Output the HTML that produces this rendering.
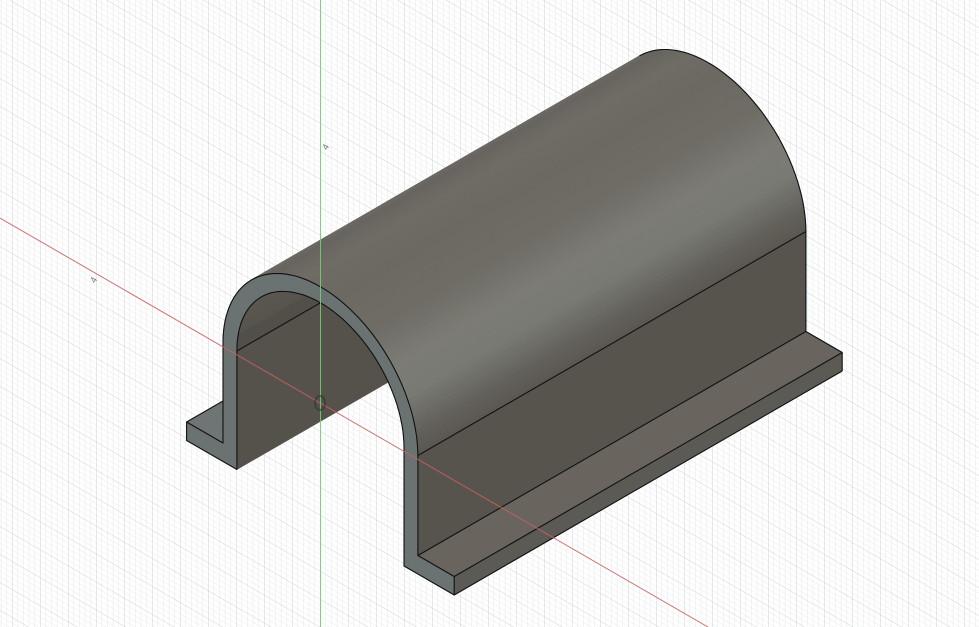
<!DOCTYPE html>
<html><head><meta charset="utf-8">
<style>html,body{margin:0;padding:0;background:#fff;overflow:hidden;width:979px;height:627px}svg{display:block}</style>
</head><body>
<svg id="s" width="979" height="627" viewBox="0 0 979 627" xmlns="http://www.w3.org/2000/svg">
<defs>
<pattern id="gMinor" width="5.6" height="5.6" patternUnits="userSpaceOnUse" patternTransform="translate(320,403) skewY(30)">
<path d="M0 0V5.6M0 0H5.6" stroke="#e6e8eb" stroke-width="1" fill="none"/>
</pattern>
<pattern id="gMajor" width="28" height="28" patternUnits="userSpaceOnUse" patternTransform="translate(320,403) skewY(30)">
<path d="M0 0V28M0 0H28" stroke="#d2d5d9" stroke-width="1" fill="none"/>
</pattern>
</defs>
<rect width="979" height="627" fill="#fff"/>
<rect width="979" height="627" fill="url(#gMinor)"/>
<rect width="979" height="627" fill="url(#gMajor)"/>
<g id="obj"></g>
<line x1="0" y1="218" x2="708" y2="627" stroke="#d06060" stroke-width="1" opacity="0.85"/>
<line x1="320.5" y1="0" x2="320.5" y2="627" stroke="#6fd06f" stroke-width="1" opacity="0.9"/>
<ellipse cx="320" cy="403" rx="5" ry="7" fill="none" stroke="#333" stroke-width="2" opacity="0.6"/>
<text x="322" y="150" font-family="Liberation Sans, sans-serif" font-size="9" fill="#777" transform="rotate(-60 325 146)">4</text>
<text x="90" y="283" font-family="Liberation Sans, sans-serif" font-size="9" fill="#777" transform="rotate(-60 93 279)">4</text>
</svg>
<script>
(function(){
var O=[223,443],E=[388,-224],cu=112.5,h=100,R=112.5,r=96.5,t=18.5;
function P(u,v){return [O[0]+u*0.866,O[1]+u*0.5-v];}
function B(p){return [p[0]+E[0],p[1]+E[1]];}
function arc(rad,a0,a1,n){var a=[];for(var i=0;i<=n;i++){var th=(a0+(a1-a0)*i/n)*Math.PI/180;a.push(P(cu+rad*Math.cos(th),h+rad*Math.sin(th)));}return a;}
var g=document.getElementById('obj'),out='';
function poly(pts,fill,stroke,sw){out+='<polygon points="'+pts.map(function(p){return p[0].toFixed(1)+','+p[1].toFixed(1)}).join(' ')+'" fill="'+fill+'" stroke="'+(stroke||fill)+'" stroke-width="'+(sw||0.6)+'" stroke-linejoin="round"/>';}
function line(a,b){out+='<line x1="'+a[0].toFixed(1)+'" y1="'+a[1].toFixed(1)+'" x2="'+b[0].toFixed(1)+'" y2="'+b[1].toFixed(1)+'" stroke="#111" stroke-width="1.1"/>';}
function pl(pts){out+='<polyline points="'+pts.map(function(p){return p[0].toFixed(1)+','+p[1].toFixed(1)}).join(' ')+'" fill="none" stroke="#111" stroke-width="1.1"/>';}
function lerp(c1,c2,f){var a=[parseInt(c1.substr(1,2),16),parseInt(c1.substr(3,2),16),parseInt(c1.substr(5,2),16)],b=[parseInt(c2.substr(1,2),16),parseInt(c2.substr(3,2),16),parseInt(c2.substr(5,2),16)];return 'rgb('+a.map(function(x,i){return Math.round(x+(b[i]-x)*f)}).join(',')+')';}
var stops=[[0,'#5a5751'],[12,'#64625c'],[28,'#7a7a74'],[42,'#7c7b75'],[58,'#6f6d66'],[80,'#6b6962'],[100,'#6f6c65'],[118,'#686560'],[135,'#6f6c66'],[150,'#5e5b54'],[180,'#57544e']];
function shade(a){for(var i=0;i<stops.length-1;i++){if(a>=stops[i][0]&&a<=stops[i+1][0]){return lerp(stops[i][1],stops[i+1][1],(a-stops[i][0])/(stops[i+1][0]-stops[i][0]));}}return stops[stops.length-1][1];}
// left flange top (behind everything)
poly([P(-42,0),P(0,0),B(P(0,0)),B(P(-42,0))],'#6f7574');
line(P(-42,0),B(P(-42,0)));
// interior
var ia=arc(r,0,180,60);
for(var i=0;i<60;i++){poly([ia[i],ia[i+1],B(ia[i+1]),B(ia[i])],'#524f49');}
var lw=[P(16,-t),P(16,h),B(P(16,h)),B(P(16,-t))];
poly(lw,'#55524b');
line(P(16,h),B(P(16,h)));
// outer arch strips
var n=90,oa=arc(R,180,0,n);
for(var i=0;i<n;i++){var ang=180-(i+0.5)*180/n;var c=shade(ang);poly([oa[i],oa[i+1],B(oa[i+1]),B(oa[i])],c,c,0.8);}
poly([P(225,0),P(225,h),B(P(225,h)),B(P(225,0))],'#57544d');
poly([P(225,0),P(267,0),B(P(267,0)),B(P(225,0))],'#69655e');
poly([P(267,0),P(267,-t),B(P(267,-t)),B(P(267,0))],'#5c5a55');
line(P(225,h),B(P(225,h)));
line(P(225,0),B(P(225,0)));
line(P(267,0),B(P(267,0)));
line(P(267,-t),B(P(267,-t)));
var tp=arc(R,135,135,0)[0];line(tp,B(tp));
pl(arc(R,135,0,40).map(B).concat([B(P(225,0)),B(P(267,0)),B(P(267,-t))]));
var prof=[P(-42,0),P(0,0),P(0,h)].concat(arc(R,180,0,60)).concat([P(225,0),P(267,0),P(267,-t),P(209,-t)]).concat(arc(r,0,180,60)).concat([P(16,-t),P(-42,-t)]);
poly(prof,'#6b7372','#111',1.1);
g.innerHTML=out;
})();
</script>
</body></html>
